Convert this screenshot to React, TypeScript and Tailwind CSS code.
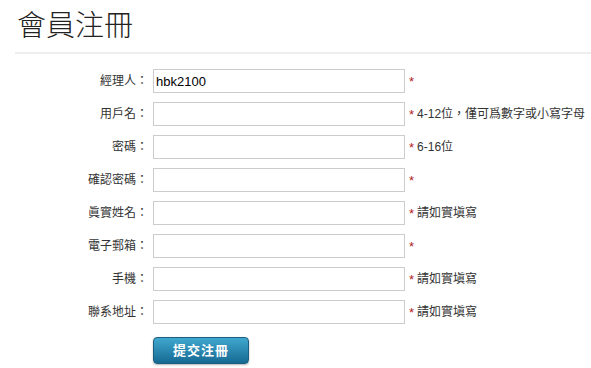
const fields = [
  { label: "經理人：", value: "hbk2100", hint: "" },
  { label: "用戶名：", value: "", hint: "4-12位，僅可爲數字或小寫字母" },
  { label: "密碼：", value: "", hint: "6-16位" },
  { label: "確認密碼：", value: "", hint: "" },
  { label: "眞實姓名：", value: "", hint: "請如實塡寫" },
  { label: "電子郵箱：", value: "", hint: "" },
  { label: "手機：", value: "", hint: "請如實塡寫" },
  { label: "聯系地址：", value: "", hint: "請如實塡寫" },
];

const cjk = "font-['Liberation_Sans','Noto_Sans_CJK_TC',sans-serif]";

export default function App() {
  return (
    <div className={`w-[591px] h-[368px] bg-white overflow-hidden ${cjk} text-[#333]`}>
      <div className="pl-[15px]">
        <h1 className="h-[54px] pl-[2px] pt-[8px] text-[29px] leading-[36px] font-light text-[#222] border-b-2 border-[#eeeeee]">
          會員注冊
        </h1>
      </div>
      <div className="pt-[15px] flex flex-col gap-[9px]">
        {fields.map((f) => (
          <div key={f.label} className="flex items-center h-[24px]">
            <label className="w-[148px] text-right text-[12px] leading-none text-[#333]">
              {f.label}
            </label>
            <input
              defaultValue={f.value}
              className="ml-[5px] w-[252px] h-[24px] border border-[#cccccc] bg-white px-[2px] text-[13px] text-black outline-none font-['Liberation_Sans',sans-serif]"
            />
            <span className="ml-[4px] text-[13px] text-[#b22222] leading-none">*</span>
            {f.hint && (
              <span className="ml-[3px] text-[12px] leading-none text-[#333]">{f.hint}</span>
            )}
          </div>
        ))}
      </div>
      <div className="pl-[153px] pt-[13px]">
        <button className="w-[96px] h-[27px] rounded-[4px] border border-[#1b5e80] bg-gradient-to-b from-[#40a8cf] to-[#156a93] text-white text-[13px] font-bold tracking-[1px] shadow-[0_1px_2px_rgba(0,0,0,0.3)]">
          提交注冊
        </button>
      </div>
    </div>
  );
}
